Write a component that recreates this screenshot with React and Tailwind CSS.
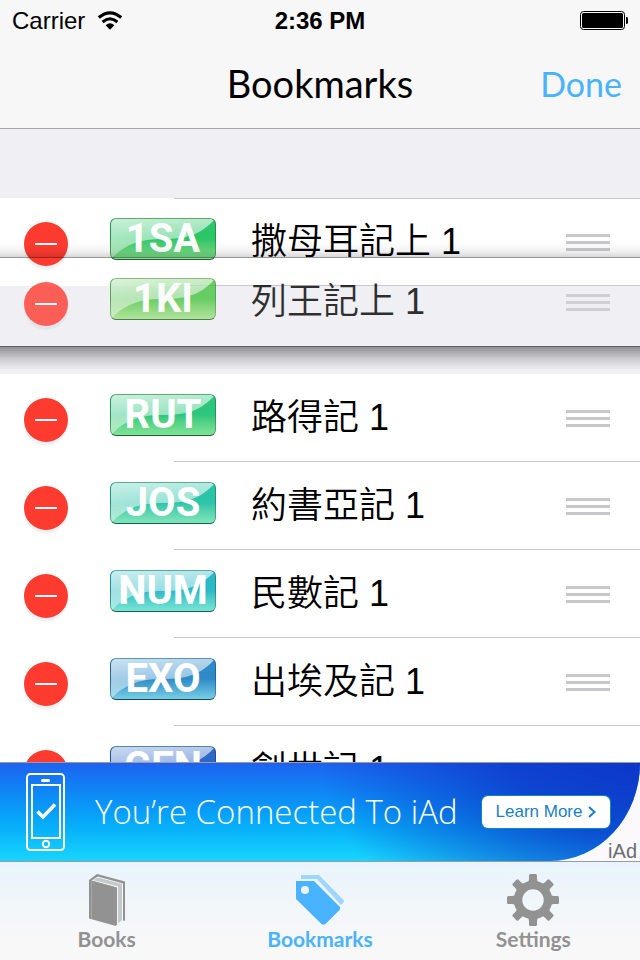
import React from 'react';

// Saved bookmarks, in the order they appear in the list.
// `badge` holds the colours under the glossy part.
const bookmarks = [
    { code: '1SA', name: '撒母耳記上 1', badge: 'from-[#2cc568] to-[#82e48e]' },
    { code: '1KI', name: '列王記上 1', badge: 'from-[#45c440] to-[#a0e284]', dragging: true },
    { code: 'RUT', name: '路得記 1', badge: 'from-[#2cc77c] to-[#80e496]' },
    { code: 'JOS', name: '約書亞記 1', badge: 'from-[#2cc4a8] to-[#80e6ba]' },
    { code: 'NUM', name: '民數記 1', badge: 'from-[#2abac6] to-[#78e6d2]' },
    { code: 'EXO', name: '出埃及記 1', badge: 'from-[#2f8bc8] to-[#76cfe4]' },
    { code: 'GEN', name: '創世記 1', badge: 'from-[#2f68c4] to-[#70b4e2]' },
];

const StatusBar = () => (
    <div className="grid h-10 grid-cols-3 items-center px-3 pt-0.5 text-2xl leading-9">
        <div className="flex items-center gap-3">
            <span>Carrier</span>
            <svg viewBox="0 0 26 20" className="h-5 w-[26px]" fill="none" stroke="black">
                <path d="M1.8 6.6 Q13 -2.8 24.2 6.6" strokeWidth="3.2" />
                <path d="M5.6 11 Q13 4.6 20.4 11" strokeWidth="3" />
                <path d="M8.6 14.2 Q13 10.2 17.4 14.2 L13 18.8 Z" fill="black" stroke="none" />
            </svg>
        </div>
        <span className="text-center font-bold">2:36 PM</span>
        <svg viewBox="0 0 48 20" className="h-5 w-12 justify-self-end">
            <rect x="0.5" y="0.5" width="44" height="18" rx="3" fill="none" stroke="black" />
            <rect x="2" y="2" width="41" height="15" rx="1.5" />
            <path d="M46 6 Q49 6 49 9.5 Q49 13 46 13 Z" />
        </svg>
    </div>
);

const NavBar = () => (
    <div className="grid h-[88px] grid-cols-3 items-center px-[18px] pb-0.5 font-['Lato',sans-serif] text-[38px]">
        <h1 className="col-start-2 text-center">Bookmarks</h1>
        <button type="button" className="justify-self-end text-[34px] text-[#4ab3ff]">Done</button>
    </div>
);

// Glossy badge with the short book code
const Badge = ({ code, colors }) => (
    <span className={`relative flex h-[42px] w-[106px] items-center justify-center rounded-md border border-black/25 border-b-black/50 bg-linear-to-b from-50% ${colors}`}>
        <svg viewBox="0 0 106 42" preserveAspectRatio="none" className="absolute inset-0 h-full w-full rounded-[5px]">
            <defs>
                <linearGradient id={`gloss-${code}`} x1="0" y1="0" x2="0.3" y2="1">
                    <stop offset="0" stopColor="white" stopOpacity="0.75" />
                    <stop offset="1" stopColor="white" stopOpacity="0.35" />
                </linearGradient>
            </defs>
            <path d="M0 0 H106 C92 16 78 21 53 21 C28 21 14 27 0 42 Z" fill={`url(#gloss-${code})`} />
        </svg>
        <span className="relative font-['Roboto',sans-serif] text-[40px] leading-10 font-bold text-white">{code}</span>
    </span>
);

const BookmarkRow = ({ code, name, badge, dragging }) => (
    <li className={dragging ? 'relative h-[88px]' : 'relative h-[88px] bg-white'}>
        {!dragging && <div className="absolute right-0 bottom-0 left-[174px] h-px bg-[#c8c7cc]" />}
        {/* The dragged row is lifted above its empty slot */}
        <div className={dragging ? 'absolute inset-x-0 -top-7 z-10 h-[88px]' : 'h-full'}>
            {dragging && (
                <>
                    <div className="absolute inset-x-0 bottom-full h-4 border-b border-black/40 bg-linear-to-t from-black/15 via-black/5 via-40% to-transparent" />
                    <div className="absolute inset-x-0 top-full h-6 border-t border-black/60 bg-linear-to-b from-black/40 via-black/15 via-50% to-transparent" />
                </>
            )}
            <div className={`flex h-full items-center pr-[30px] pl-6 ${dragging ? 'opacity-80' : ''}`}>
                <button type="button" aria-label={`Delete ${name}`} className="mt-1 flex size-11 items-center justify-center rounded-full bg-[#ff3b30] shadow-[0_4px_0_rgba(0,0,0,0.05)]">
                    <span className="h-0.5 w-[22px] bg-white" />
                </button>
                <div className="mr-[35px] mb-1.5 ml-[42px]">
                    <Badge code={code} colors={badge} />
                </div>
                <span className="flex-1 text-4xl font-[350]">{name}</span>
                <button type="button" aria-label={`Reorder ${name}`} className="flex w-11 flex-col gap-1">
                    <span className="h-[3px] bg-[#c7c7cc]" />
                    <span className="h-[3px] bg-[#c7c7cc]" />
                    <span className="h-[3px] bg-[#c7c7cc]" />
                </button>
            </div>
        </div>
    </li>
);

const AdBanner = () => (
    <div className="relative h-[100px] shrink-0 border-y border-[#9b9b9f] bg-[#fbf9fb]">
        <div className="flex h-full items-center rounded-br-[90px_98px] bg-linear-to-b from-[#1d62f0] to-[#19d5fd]">
            <div className="flex h-full w-full items-center rounded-br-[90px_98px] bg-[radial-gradient(ellipse_320px_190px_at_100%_0%,#0c38c8,#0c38c8cc_40%,#0c38c800)] pr-[30px] pl-[26px]">
                <svg viewBox="0 0 39 78" className="h-[78px] w-[39px]" fill="none" stroke="white">
                    <rect x="1" y="1" width="37" height="76" rx="3.5" strokeWidth="2" />
                    <rect x="6" y="12" width="28" height="53" strokeWidth="2" />
                    <path d="M16.5 7.5 H22.5" strokeWidth="3" strokeLinecap="round" />
                    <circle cx="20" cy="71" r="3.2" strokeWidth="2" />
                    <path d="M11.5 38.5 L17 44 L29 31.5" strokeWidth="3.5" />
                </svg>
                <span className="ml-[30px] flex-1 font-['Open_Sans',sans-serif] text-[33px] font-light whitespace-nowrap text-white">You’re Connected To iAd</span>
                <button type="button" className="flex h-8 w-32 items-center justify-center gap-1.5 rounded-md bg-white text-[17px] text-[#1a7fc4] ring-1 ring-[#1284c8]">
                    Learn More
                    <svg viewBox="0 0 8 14" className="h-3.5 w-2" fill="none" stroke="currentColor" strokeWidth="2">
                        <path d="M1 2 L6.5 7 L1 12" />
                    </svg>
                </button>
            </div>
        </div>
        <span className="absolute right-[3px] bottom-0 text-xl leading-5 text-[#6d6d72]">iAd</span>
    </div>
);

const BookIcon = () => (
    <svg viewBox="0 0 52 52" className="size-[52px]">
        <path d="M8 6 L16 0 L44 7.5 V47 L41 46 L36 51 L8 44 Z" fill="#929292" />
        <path d="M10.5 6.5 L17 2.5 L42 9.5 V46.5 L36 52 V13.5 Z" fill="#f5f8fa" />
        <path d="M12 6 L17.5 3.5 L41 10 V46 L37 49.5 V12.5 Z" fill="#c6c9ca" />
        <path d="M8 6 L35 13.5 V52 L8 44.5 Z" fill="#929292" />
        <path d="M10.5 7 V45" stroke="#a6a6a6" />
    </svg>
);

const TagsIcon = () => (
    <svg viewBox="0 0 52 52" className="size-[52px]">
        <path d="M7 1 H25 L50 26.5 V28 L47 31 L23 5 H7 Z" fill="#9fd6ff" />
        <path fillRule="evenodd" d="M2 7 H20 L46 33 V35.5 L31 50.5 H28 L2 25 Z M11 12 A4 4 0 1 0 11 20 A4 4 0 1 0 11 12 Z" fill="#4ab3ff" />
    </svg>
);

const teeth = [0, 45, 90, 135, 180, 225, 270, 315];

const GearIcon = () => (
    <svg viewBox="0 0 52 52" className="size-[52px]" fill="#929292">
        <circle cx="26" cy="26" r="15" fill="none" stroke="#929292" strokeWidth="8.5" />
        {teeth.map((angle) => (
            <path key={angle} d="M20 10 Q22 8 22 5 V1.5 Q22 0 23.5 0 H28.5 Q30 0 30 1.5 V5 Q30 8 32 10 Z" transform={`rotate(${angle} 26 26)`} />
        ))}
    </svg>
);

const tabs = [
    { label: 'Books', icon: BookIcon },
    { label: 'Bookmarks', icon: TagsIcon, active: true },
    { label: 'Settings', icon: GearIcon },
];

const TabBar = () => (
    <nav className="grid h-[98px] shrink-0 grid-cols-3 bg-linear-to-b from-[#e8f4fc] to-[#f8f8f8] to-80%">
        {tabs.map(({ label, icon: Icon, active }) => (
            <button
                key={label}
                type="button"
                className={`flex flex-col items-center pt-3 font-['Lato',sans-serif] text-[21px] leading-[26px] font-bold ${active ? 'text-[#4ab3ff]' : 'text-[#929292]'}`}
            >
                <Icon />
                {label}
            </button>
        ))}
    </nav>
);

const App = () => (
    <div className="flex h-screen flex-col overflow-hidden bg-[#efeff4] font-['Liberation_Sans','Noto_Sans_CJK_TC',sans-serif] text-black">
        <header className="shrink-0 border-b border-[#a7a7aa] bg-[#f7f7f7]">
            <StatusBar />
            <NavBar />
        </header>
        <main className="min-h-0 flex-1 overflow-hidden pt-[69px]">
            <ul className="relative">
                <li className="absolute top-0 right-0 left-[174px] z-10 h-px bg-[#c8c7cc]" />
                {bookmarks.map((item) => (
                    <BookmarkRow key={item.code} {...item} />
                ))}
            </ul>
        </main>
        <AdBanner />
        <TabBar />
    </div>
);

export default App;
